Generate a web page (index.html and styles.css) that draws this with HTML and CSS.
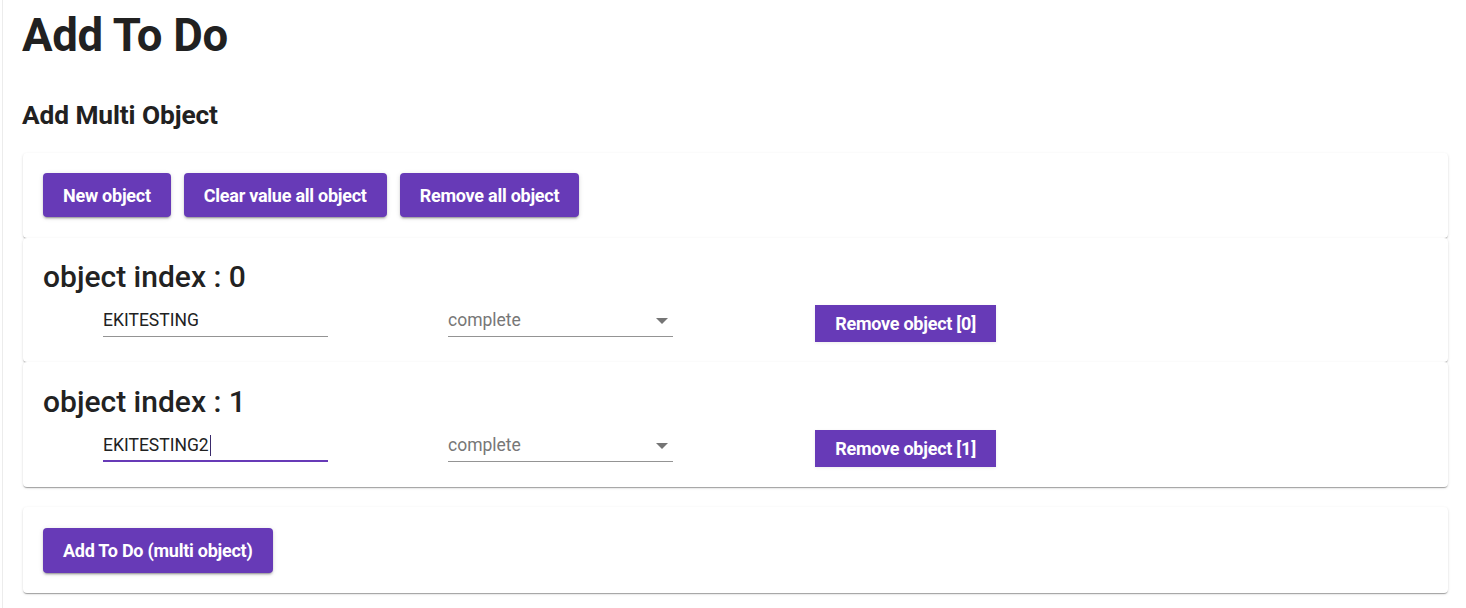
FILE: index.html
```html
<!DOCTYPE html>
<html>
<head>
<meta charset="utf-8">
<link rel="stylesheet" href="styles.css">
</head>
<body>
<div class="page">
  <h1 class="title">Add To Do</h1>
  <h2 class="subtitle">Add Multi Object</h2>

  <div class="card card-actions">
    <button class="btn">New object</button>
    <button class="btn">Clear value all object</button>
    <button class="btn">Remove all object</button>
  </div>

  <div class="card card-object">
    <h3 class="obj-title">object index : 0</h3>
    <div class="obj-row">
      <div class="cell"><div class="field"><span class="value">EKITESTING</span></div></div>
      <div class="cell"><div class="field select"><span class="muted">complete</span><span class="arrow"></span></div></div>
      <div class="cell"><button class="btn btn-flat">Remove object [0]</button></div>
      <div class="cell"></div>
    </div>
  </div>

  <div class="card card-object card-object-last">
    <h3 class="obj-title">object index : 1</h3>
    <div class="obj-row">
      <div class="cell"><div class="field focused"><span class="value">EKITESTING2</span><span class="caret"></span></div></div>
      <div class="cell"><div class="field select"><span class="muted">complete</span><span class="arrow"></span></div></div>
      <div class="cell"><button class="btn btn-flat">Remove object [1]</button></div>
      <div class="cell"></div>
    </div>
  </div>

  <div class="card card-submit">
    <button class="btn btn-big">Add To Do (multi object)</button>
  </div>
</div>
</body>
</html>
```

FILE: styles.css
```css
html, body {
  margin: 0;
  padding: 0;
  background: #ffffff;
  font-family: Roboto, "Liberation Sans", Arial, sans-serif;
  color: #212121;
}

.page {
  margin-left: 2px;
  border-left: 1px solid #ececec;
  padding: 8px 18px 20px 20px;
  min-height: 600px;
}

.title {
  margin: 0 0 0 -1px;
  font-size: 45.5px;
  line-height: 56px;
  font-weight: 700;
  letter-spacing: -0.3px;
}

.subtitle {
  margin: 36px 0 23px -1px;
  font-size: 26.3px;
  line-height: 30px;
  font-weight: 700;
  letter-spacing: -0.1px;
}

.card {
  background: #fff;
  border-radius: 4px;
  box-shadow: 0px 2px 1px -1px rgba(0,0,0,0.2), 0px 1px 1px 0px rgba(0,0,0,0.14), 0px 1px 3px 0px rgba(0,0,0,0.12);
}

.card-actions {
  display: flex;
  gap: 13px;
  padding: 20px 20px 21px;
}

.btn {
  font-family: Roboto, "Liberation Sans", Arial, sans-serif;
  font-weight: 700;
  font-size: 18px;
  color: #fff;
  background: #673ab7;
  border: none;
  border-radius: 4px;
  height: 44px;
  padding: 0 20px;
  letter-spacing: -0.25px;
  box-shadow: 0px 3px 1px -2px rgba(0,0,0,0.2), 0px 2px 2px 0px rgba(0,0,0,0.14), 0px 1px 5px 0px rgba(0,0,0,0.12);
}

.card-object {
  padding: 21px 20px 20px;
}

.card-object-last {
  padding-top: 22px;
  padding-bottom: 20px;
}

.obj-title {
  margin: 0;
  font-size: 30px;
  line-height: 35px;
  font-weight: 500;
  color: #222;
}

.obj-row {
  display: grid;
  grid-template-columns: repeat(3, 345px) 1fr;
  margin-top: 11px;
  height: 37px;
}

.cell {
  display: flex;
  justify-content: center;
  align-items: flex-start;
}

.field {
  position: relative;
  width: 225px;
  height: 31px;
  border-bottom: 1px solid rgba(0,0,0,0.42);
  font-size: 17.5px;
  line-height: 31px;
  display: flex;
  align-items: center;
}

.field.focused {
  height: 30px;
  border-bottom: 2px solid #673ab7;
}

.value {
  color: #212121;
}

.caret {
  display: inline-block;
  width: 1px;
  height: 21px;
  background: #3a2a6b;
  margin-left: 1px;
}

.muted {
  color: #777;
}

.arrow {
  position: absolute;
  right: 5px;
  top: 13px;
  width: 0;
  height: 0;
  border-left: 6px solid transparent;
  border-right: 6px solid transparent;
  border-top: 6px solid #757575;
}

.btn-flat {
  height: 37px;
  border-radius: 0;
  box-shadow: 0 1px 3px rgba(0,0,0,0.08);
}

.card-submit {
  margin-top: 20px;
  padding: 21px 20px 20px;
}

.btn-big {
  height: 45px;
}
```
